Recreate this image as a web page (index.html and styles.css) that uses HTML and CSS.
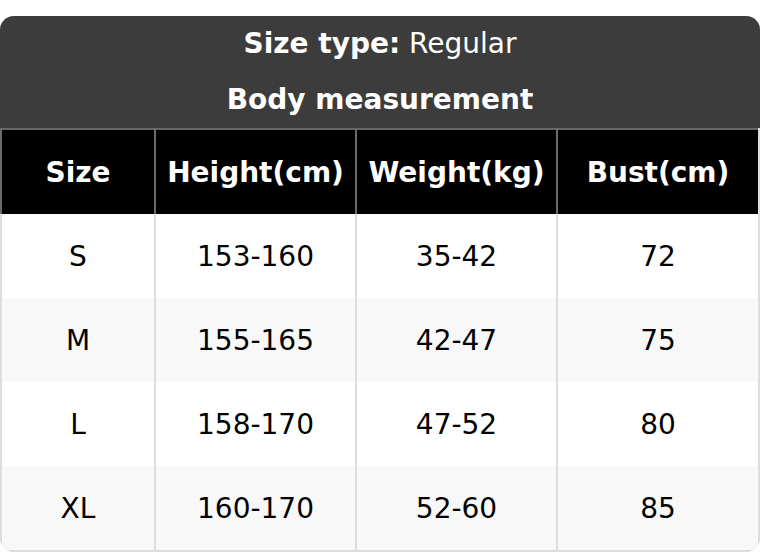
FILE: index.html
```html
<!DOCTYPE html>
<html lang="en">
<head>
<meta charset="utf-8">
<title>Size chart</title>
<link rel="stylesheet" href="styles.css">
</head>
<body>
<div class="card">
  <div class="head">
    <div class="head-line"><b>Size type:</b> Regular</div>
    <div class="head-line"><b>Body measurement</b></div>
  </div>
  <div class="grid">
    <div class="cell th">Size</div>
    <div class="cell th">Height(cm)</div>
    <div class="cell th">Weight(kg)</div>
    <div class="cell th">Bust(cm)</div>

    <div class="cell">S</div>
    <div class="cell">153-160</div>
    <div class="cell">35-42</div>
    <div class="cell">72</div>

    <div class="cell alt">M</div>
    <div class="cell alt">155-165</div>
    <div class="cell alt">42-47</div>
    <div class="cell alt">75</div>

    <div class="cell">L</div>
    <div class="cell">158-170</div>
    <div class="cell">47-52</div>
    <div class="cell">80</div>

    <div class="cell alt">XL</div>
    <div class="cell alt">160-170</div>
    <div class="cell alt">52-60</div>
    <div class="cell alt">85</div>
  </div>
</div>
</body>
</html>
```

FILE: styles.css
```css
html, body {
  margin: 0;
  padding: 0;
  background: #ffffff;
}
body {
  font-family: "DejaVu Sans", "Liberation Sans", sans-serif;
  color: #000;
}
.card {
  margin-top: 16px;
  width: 760px;
  height: 536px;
  box-sizing: border-box;
  border-radius: 14px;
  overflow: hidden;
  background: #dddddd;
}
.head {
  background: #3c3c3c;
  color: #ffffff;
  text-align: center;
  font-size: 28px;
}
.head-line {
  height: 56px;
  line-height: 56px;
  white-space: nowrap;
}
.head-line b {
  font-weight: bold;
}
.grid {
  display: grid;
  grid-template-columns: 152px 199px 199px 200px;
  grid-template-rows: 86px;
  grid-auto-rows: 84px;
  column-gap: 2px;
  padding: 0 2px 2px 2px;
  background: #dddddd;
}
.cell {
  display: flex;
  align-items: center;
  justify-content: center;
  font-size: 28px;
  background: #ffffff;
}
.cell.alt {
  background: #f8f8f8;
}
.th {
  background: #000000;
  color: #ffffff;
  font-weight: bold;
  border-top: 2px solid #666666;
  position: relative;
}
.th::before {
  content: "";
  position: absolute;
  top: -2px;
  left: -2px;
  width: 2px;
  height: 86px;
  background: #6a6a6a;
}
```
